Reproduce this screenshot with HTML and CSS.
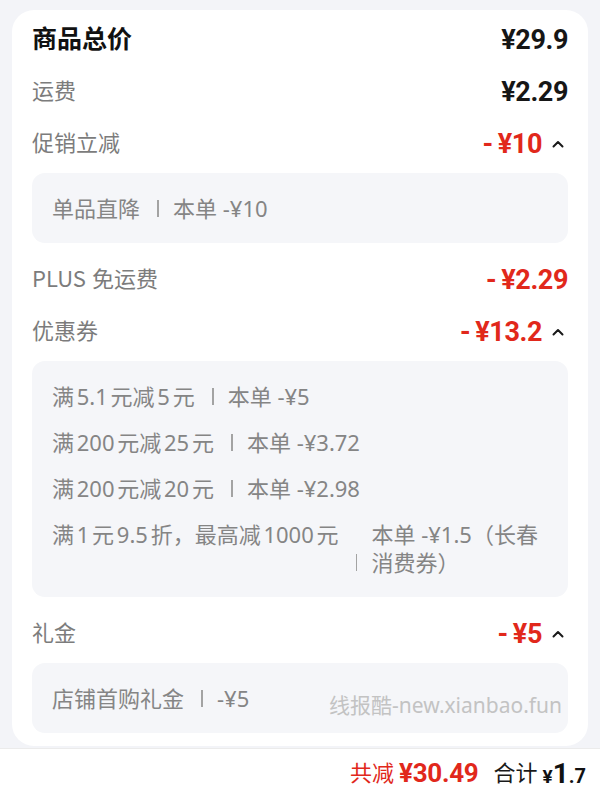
FILE: index.html
```html
<!DOCTYPE html>
<html lang="zh-CN">
<head>
<meta charset="utf-8">
<title>价格明细</title>
<link rel="stylesheet" href="styles.css">
</head>
<body>
<div class="card">
  <div class="row">
    <span class="title">商品总价</span>
    <span class="price">¥29.9</span>
  </div>
  <div class="row">
    <span class="label">运费</span>
    <span class="price">¥2.29</span>
  </div>
  <div class="row">
    <span class="label">促销立减</span>
    <span class="amount"><span class="price red"><span class="minus">-</span>¥10</span><svg class="caret" width="12" height="8" viewBox="0 0 12 8"><path d="M1.5 6.5 L6 2 L10.5 6.5" fill="none" stroke="#1a1a1a" stroke-width="2" stroke-linecap="round" stroke-linejoin="round"/></svg></span>
  </div>
  <div class="detail">
    <div class="item"><span class="left">单品直降</span><i class="sep"></i><span class="right">本单 -¥10</span></div>
  </div>
  <div class="row">
    <span class="label">PLUS<span class="gap"></span>免运费</span>
    <span class="price red"><span class="minus">-</span>¥2.29</span>
  </div>
  <div class="row">
    <span class="label">优惠券</span>
    <span class="amount"><span class="price red"><span class="minus">-</span>¥13.2</span><svg class="caret" width="12" height="8" viewBox="0 0 12 8"><path d="M1.5 6.5 L6 2 L10.5 6.5" fill="none" stroke="#1a1a1a" stroke-width="2" stroke-linecap="round" stroke-linejoin="round"/></svg></span>
  </div>
  <div class="detail">
    <div class="item"><span class="left">满5.1元减5元</span><i class="sep"></i><span class="right">本单 -¥5</span></div>
    <div class="item"><span class="left">满200元减25元</span><i class="sep"></i><span class="right">本单 -¥3.72</span></div>
    <div class="item"><span class="left">满200元减20元</span><i class="sep"></i><span class="right">本单 -¥2.98</span></div>
    <div class="item multi"><span class="left">满1元9.5折，最高减1000元</span><i class="sep"></i><span class="right">本单 -¥1.5（长春消费券）</span></div>
  </div>
  <div class="row">
    <span class="label">礼金</span>
    <span class="amount"><span class="price red"><span class="minus">-</span>¥5</span><svg class="caret" width="12" height="8" viewBox="0 0 12 8"><path d="M1.5 6.5 L6 2 L10.5 6.5" fill="none" stroke="#1a1a1a" stroke-width="2" stroke-linecap="round" stroke-linejoin="round"/></svg></span>
  </div>
  <div class="detail last">
    <div class="item"><span class="left">店铺首购礼金</span><i class="sep"></i><span class="right">-¥5</span></div>
    <span class="watermark">线报酷-new.xianbao.fun</span>
  </div>
</div>
<div class="footer">
  <span class="save-label">共减</span>
  <span class="save-num">¥30.49</span>
  <span class="total-label">合计</span>
  <span class="total"><span class="yen">¥</span><span class="int">1</span><span class="dec">.7</span></span>
</div>
</body>
</html>
```

FILE: styles.css
```css
* { box-sizing: border-box; }
html, body { margin: 0; padding: 0; }
body {
  background: #f3f4f8;
  font-family: "Noto Sans CJK SC", "Noto Sans", sans-serif;
  color: #1a1a1a;
  width: 600px;
  height: 797px;
  overflow: hidden;
  text-autospace: normal;
}
.card {
  background: #ffffff;
  margin: 10px 12px 2px;
  border-radius: 22px;
  padding: 4px 20px 13px;
}
.row {
  height: 52px;
  display: flex;
  align-items: center;
  justify-content: space-between;
}
.title {
  font-size: 25px;
  font-weight: 700;
  color: #111111;
  margin-bottom: 6px;
}
.label {
  font-size: 22px;
  color: #7c7c7c;
  margin-bottom: 7px;
  display: flex;
  align-items: center;
}
.gap {
  display: inline-block;
  width: 6px;
}
.price {
  font-family: Roboto, "Noto Sans", sans-serif;
  font-size: 27px;
  font-weight: 700;
  letter-spacing: -0.4px;
  color: #161616;
}
.price.red { color: #e1281b; }
.minus {
  margin-right: 5px;
}
.amount {
  display: flex;
  align-items: center;
}
.caret {
  margin-left: 10px;
  margin-right: 4px;
  display: block;
}
.detail {
  position: relative;
  background: #f5f6f9;
  border-radius: 13px;
  margin: 3px 0 11px;
  padding: 21px 20px;
  display: flex;
  flex-direction: column;
  gap: 18px;
}
.detail.last { margin-bottom: 0; }
.item {
  display: flex;
  align-items: center;
  gap: 14px;
  font-family: "Noto Sans", "Noto Sans CJK SC", sans-serif;
  font-size: 22px;
  line-height: 28px;
  color: #858585;
}
.sep {
  display: block;
  width: 2px;
  height: 17px;
  background: #a3a3a3;
  margin-left: 3px;
}
.item.multi { align-items: flex-start; }
.item.multi .left { flex: none; }
.item.multi .sep { align-self: flex-end; margin-bottom: 5px; }
.item.multi .right { width: 178px; }
.watermark {
  position: absolute;
  right: 6px;
  top: 26px;
  font-family: "Noto Sans", "Noto Sans CJK SC", sans-serif;
  font-size: 21px;
  color: #c3c3c3;
  white-space: nowrap;
}
.footer {
  height: 49px;
  background: #ffffff;
  border-top: 1px solid #ebebeb;
  display: flex;
  justify-content: flex-end;
  align-items: center;
  padding-right: 14px;
}
.save-label {
  font-size: 22px;
  color: #e1281b;
  margin-right: 5px;
  margin-bottom: 4px;
}
.save-num {
  font-family: Roboto, "Noto Sans", sans-serif;
  font-size: 26px;
  font-weight: 700;
  color: #e1281b;
  letter-spacing: -0.3px;
}
.total-label {
  font-size: 22px;
  color: #1a1a1a;
  margin-left: 15px;
  margin-right: 5px;
  margin-bottom: 4px;
}
.total {
  font-family: Roboto, "Noto Sans", sans-serif;
  font-weight: 700;
  color: #111111;
}
.total .yen { font-size: 19px; }
.total .int { font-size: 28px; }
.total .dec { font-size: 20px; }
```
